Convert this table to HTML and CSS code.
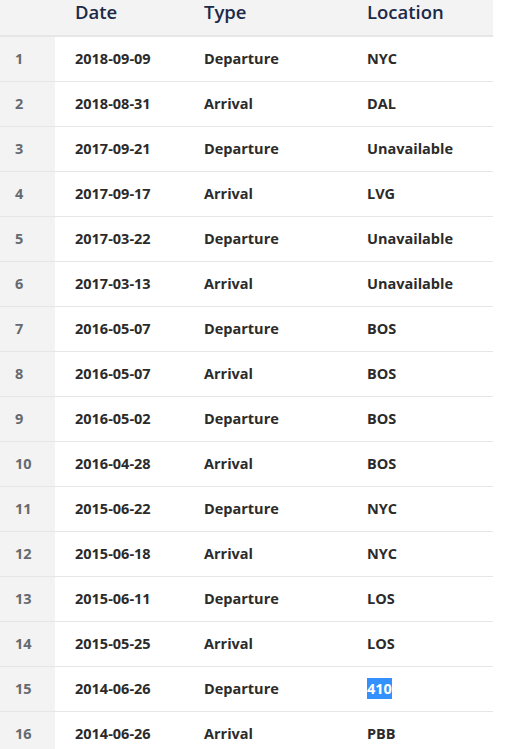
FILE: index.html
```html
<!DOCTYPE html>
<html>
<head>
<meta charset="utf-8">
<link rel="stylesheet" href="styles.css">
</head>
<body>
<table class="log">
  <colgroup>
    <col class="c-idx"><col class="c-date"><col class="c-type"><col class="c-loc">
  </colgroup>
  <thead>
    <tr><th class="idx"></th><th>Date</th><th>Type</th><th>Location</th></tr>
  </thead>
  <tbody>
    <tr><td class="idx">1</td><td>2018-09-09</td><td>Departure</td><td>NYC</td></tr>
    <tr><td class="idx">2</td><td>2018-08-31</td><td>Arrival</td><td>DAL</td></tr>
    <tr><td class="idx">3</td><td>2017-09-21</td><td>Departure</td><td>Unavailable</td></tr>
    <tr><td class="idx">4</td><td>2017-09-17</td><td>Arrival</td><td>LVG</td></tr>
    <tr><td class="idx">5</td><td>2017-03-22</td><td>Departure</td><td>Unavailable</td></tr>
    <tr><td class="idx">6</td><td>2017-03-13</td><td>Arrival</td><td>Unavailable</td></tr>
    <tr><td class="idx">7</td><td>2016-05-07</td><td>Departure</td><td>BOS</td></tr>
    <tr><td class="idx">8</td><td>2016-05-07</td><td>Arrival</td><td>BOS</td></tr>
    <tr><td class="idx">9</td><td>2016-05-02</td><td>Departure</td><td>BOS</td></tr>
    <tr><td class="idx">10</td><td>2016-04-28</td><td>Arrival</td><td>BOS</td></tr>
    <tr><td class="idx">11</td><td>2015-06-22</td><td>Departure</td><td>NYC</td></tr>
    <tr><td class="idx">12</td><td>2015-06-18</td><td>Arrival</td><td>NYC</td></tr>
    <tr><td class="idx">13</td><td>2015-06-11</td><td>Departure</td><td>LOS</td></tr>
    <tr><td class="idx">14</td><td>2015-05-25</td><td>Arrival</td><td>LOS</td></tr>
    <tr><td class="idx">15</td><td>2014-06-26</td><td>Departure</td><td><span class="sel">410</span></td></tr>
    <tr><td class="idx">16</td><td>2014-06-26</td><td>Arrival</td><td>PBB</td></tr>
  </tbody>
</table>
</body>
</html>
```
FILE: styles.css
```css
html, body {
  margin: 0;
  padding: 0;
  background: #fff;
}
body {
  font-family: "Open Sans", "Liberation Sans", sans-serif;
  overflow: hidden;
}
.log {
  border-collapse: collapse;
  table-layout: fixed;
  width: 493px;
}
.c-idx { width: 55px; }
.c-date { width: 129px; }
.c-type { width: 163px; }
.c-loc { width: 146px; }
.log th {
  background: #f3f3f3;
  color: #1c2a48;
  font-size: 18.5px;
  font-weight: 600;
  text-align: left;
  height: 35px;
  padding: 0 0 0 20px;
  line-height: 23px;
  vertical-align: top;
  border-bottom: 2px solid #e6e6e6;
}
.log td {
  color: #2b2b2b;
  font-size: 14.5px;
  font-weight: 700;
  height: 42px;
  padding: 0 0 2px 20px;
  border-bottom: 1px solid #e6e6e6;
  vertical-align: middle;
}
.log td.idx {
  background: #f3f3f3;
  color: #666a70;
  padding-left: 15px;
}
.sel {
  background: #3390ff;
  color: #fff;
  padding: 1px 0;
}
```
